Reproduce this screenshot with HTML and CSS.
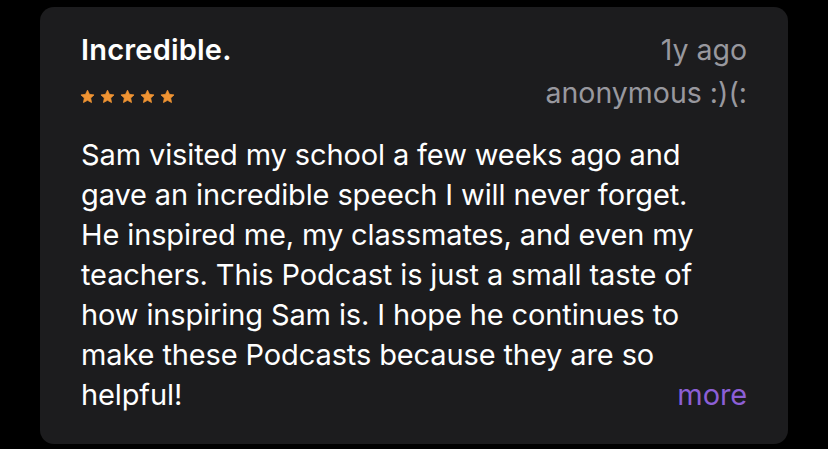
FILE: index.html
```html
<!DOCTYPE html>
<html>
<head>
<meta charset="utf-8">
<link rel="stylesheet" href="styles.css">
</head>
<body>
<div class="card">
  <div class="head">
    <div class="left">
      <div class="title">Incredible.</div>
      <div class="stars">
        <svg viewBox="0 0 24 24"><path d="M12 1.8L15.12 8.51 22.46 9.4 17.04 14.44 18.47 21.7 12 18.1 5.53 21.7 6.96 14.44 1.54 9.4 8.88 8.51Z"/></svg>
        <svg viewBox="0 0 24 24"><path d="M12 1.8L15.12 8.51 22.46 9.4 17.04 14.44 18.47 21.7 12 18.1 5.53 21.7 6.96 14.44 1.54 9.4 8.88 8.51Z"/></svg>
        <svg viewBox="0 0 24 24"><path d="M12 1.8L15.12 8.51 22.46 9.4 17.04 14.44 18.47 21.7 12 18.1 5.53 21.7 6.96 14.44 1.54 9.4 8.88 8.51Z"/></svg>
        <svg viewBox="0 0 24 24"><path d="M12 1.8L15.12 8.51 22.46 9.4 17.04 14.44 18.47 21.7 12 18.1 5.53 21.7 6.96 14.44 1.54 9.4 8.88 8.51Z"/></svg>
        <svg viewBox="0 0 24 24"><path d="M12 1.8L15.12 8.51 22.46 9.4 17.04 14.44 18.47 21.7 12 18.1 5.53 21.7 6.96 14.44 1.54 9.4 8.88 8.51Z"/></svg>
      </div>
    </div>
    <div class="right">
      <div class="date">1y ago</div>
      <div class="author">anonymous :)(:</div>
    </div>
  </div>
  <div class="body">
    <div class="line">Sam visited my school a few weeks ago and</div>
    <div class="line">gave an incredible speech I will never forget.</div>
    <div class="line">He inspired me, my classmates, and even my</div>
    <div class="line">teachers. This Podcast is just a small taste of</div>
    <div class="line">how inspiring Sam is. I hope he continues to</div>
    <div class="line">make these Podcasts because they are so</div>
    <div class="line last"><span>helpful!</span><span class="more">more</span></div>
  </div>
</div>
</body>
</html>
```
FILE: styles.css
```css
html, body {
  margin: 0;
  padding: 0;
  background: #000;
}
body {
  padding: 7px 40px 5px 40px;
  font-family: Inter, "Noto Sans", sans-serif;
  -webkit-font-smoothing: antialiased;
}
.card {
  background: #1c1c1e;
  border-radius: 14px;
  padding: 22.5px 41px 0 41px;
  height: 437px;
  box-sizing: border-box;
}
.head {
  display: flex;
  justify-content: space-between;
}
.title {
  color: #fff;
  font-size: 29px;
  font-weight: 600;
  line-height: 40px;
  letter-spacing: 0.2px;
}
.stars {
  display: flex;
  gap: 5px;
  margin-top: 19px;
  margin-left: -1px;
}
.stars svg {
  width: 15px;
  height: 15px;
  fill: #f09433;
  stroke: #f09433;
  stroke-width: 1.2;
  stroke-linejoin: round;
}
.right {
  text-align: right;
  color: #98989e;
  font-size: 28.5px;
  line-height: 40px;
}
.author {
  margin-top: 3px;
}
.body {
  margin-top: 22px;
  color: #fff;
  font-size: 29px;
  line-height: 40px;
  letter-spacing: -0.12px;
}
.line {
  white-space: nowrap;
}
.last {
  display: flex;
  justify-content: space-between;
}
.more {
  color: #8c5fd6;
}
```
